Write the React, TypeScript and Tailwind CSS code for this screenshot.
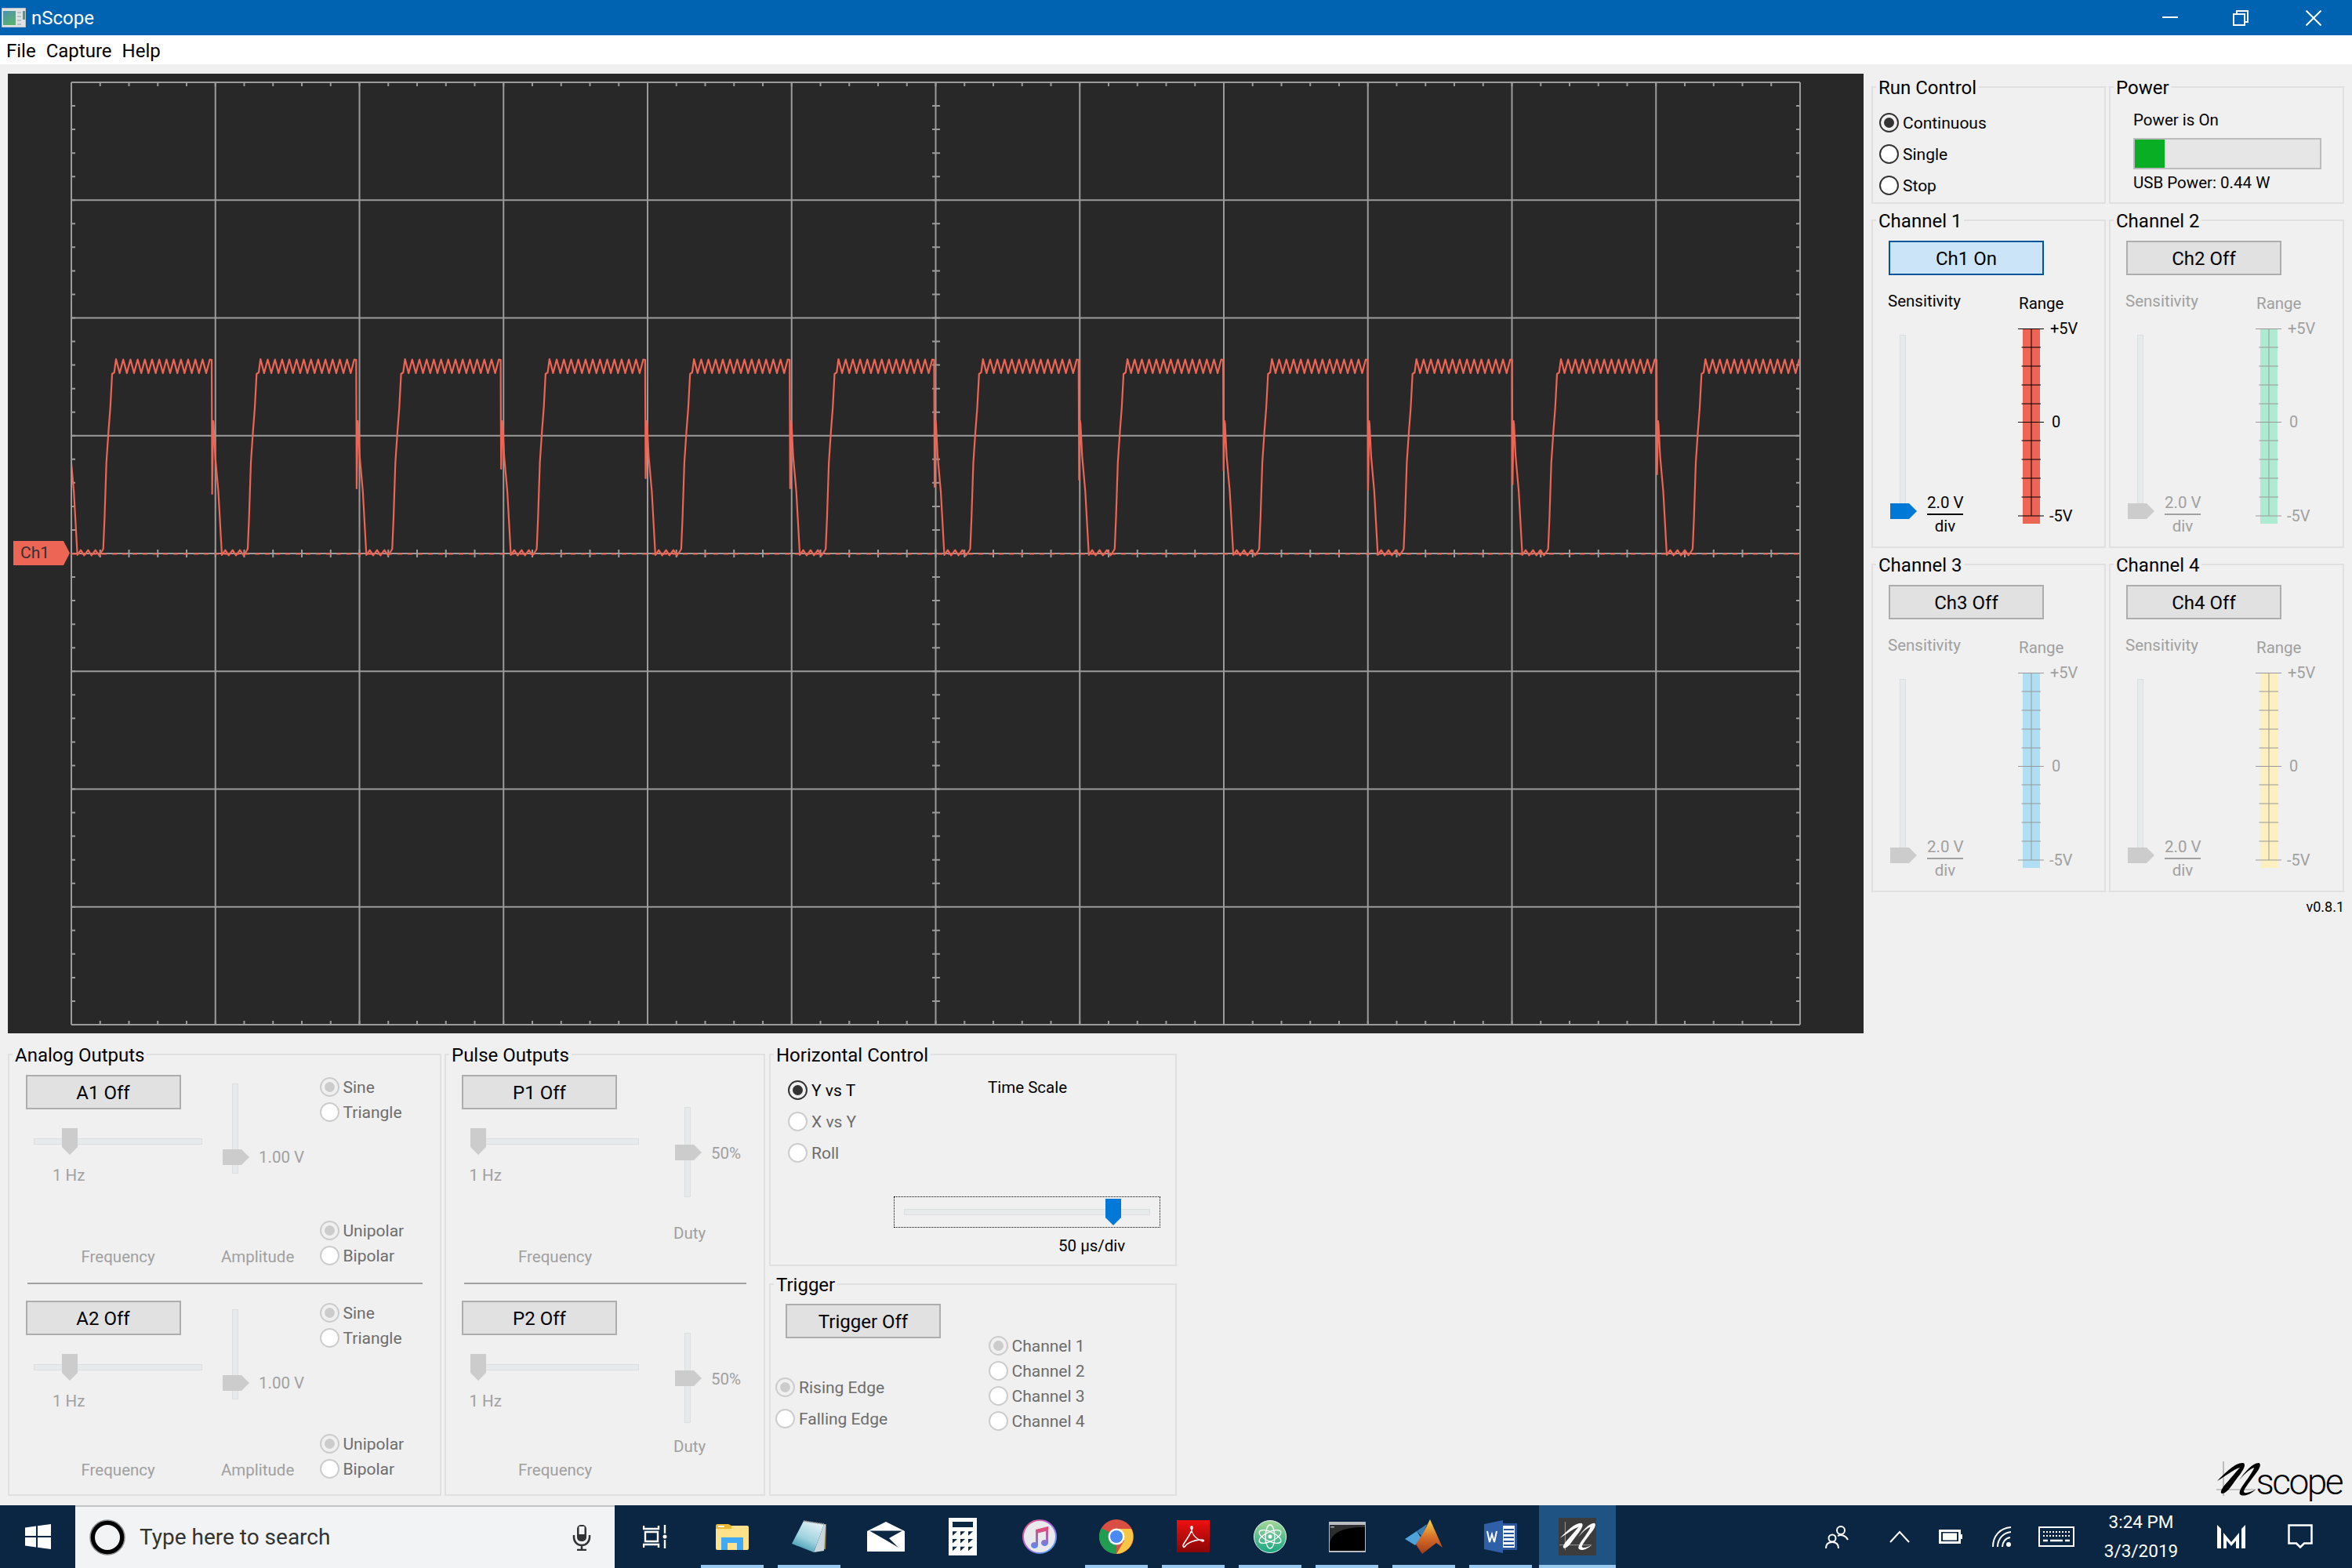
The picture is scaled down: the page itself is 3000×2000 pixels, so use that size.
import React from 'react'

const GRID = '#9b9b9b'
const TRACE = '#ec6555'
const gridX = Array.from({ length: 13 }, (_, i) => 91 + i * 183.75)
const gridY = Array.from({ length: 9 }, (_, i) => 105 + i * 150.25)

// waveform: one period per grid division
const spikes = [600, 630, 623, 598, 610, 623, 621, 612, 600, 625, 618, 605, 615]
const buildTrace = () => {
  let d = ''
  spikes.forEach((spike, k) => {
    const t = 270 + (k - 1) * 184.3
    const rel: [number, number][] = [
      [0, 459], [0.3, 540], [0.6, spike], [2, 537], [3, 562], [2.4, 540], [4.5, 582], [8.5, 627], [13, 708],
      [17.3, 701.7], [21.7, 708.3], [26.7, 701.7], [31, 708.3], [36, 701.7], [40.7, 708.3], [45, 702], [46, 700],
      [47.7, 660], [50, 590], [52.7, 550], [55, 520], [57.3, 477], [60, 475], [62.3, 458],
    ]
    for (let i = 0; i < 13; i++) {
      rel.push([66.9 + i * 9.2, 476], [71.5 + i * 9.2, 458.5])
    }
    rel.forEach(([x, y]) => {
      d += `${d ? 'L' : 'M'}${(t + x).toFixed(1)} ${y} `
    })
  })
  return d
}

const ticks = () => {
  let d = ''
  for (let i = 0; i <= 60; i++) {
    const x = 91 + i * 36.75
    d += `M${x} 105v5 M${x} 1307v-5 M${x} 701v10 `
  }
  for (let i = 0; i <= 40; i++) {
    const y = 105 + i * 30.05
    d += `M91 ${y}h5 M2296 ${y}h-5 M1189 ${y}h10 `
  }
  return d
}

const Scope = () => (
  <div className="relative w-[2367px] h-[1224px] bg-[#282828]">
    <svg className="block" width="2367" height="1224" viewBox="10 94 2367 1224" fill="none">
      <defs>
        <clipPath id="plot">
          <rect x="92" y="105" width="2204" height="1202" />
        </clipPath>
      </defs>
      {gridX.map((x) => (
        <line key={x} x1={x} x2={x} y1="105" y2="1307" stroke={GRID} strokeWidth="2" />
      ))}
      {gridY.map((y) => (
        <line key={y} x1="91" x2="2296" y1={y} y2={y} stroke={GRID} strokeWidth="2" />
      ))}
      <path d={ticks()} stroke={GRID} strokeWidth="2" />
      <line x1="91" x2="2296" y1="706.5" y2="706.5" stroke={TRACE} strokeWidth="2" strokeDasharray="6 7" />
      <path d={buildTrace()} stroke={TRACE} strokeWidth="2.2" strokeLinejoin="round" clipPath="url(#plot)" />
    </svg>
    <div className="absolute left-[7px] top-[596px] w-[72px] h-[31px]">
      <svg className="absolute inset-0" width="72" height="31">
        <polygon points="0,0 64,0 72,15.5 64,31 0,31" fill={TRACE} />
      </svg>
      <span className="absolute left-[9px] top-[1px] text-[21px] leading-[29px] text-[#33302f]">Ch1</span>
    </div>
  </div>
)

const GroupBox = ({ title, className, children }: { title: string; className: string; children?: React.ReactNode }) => (
  <div className={`relative border-2 border-[#e0e0e0] ${className}`}>
    <span className="absolute left-[4px] top-[-16px] bg-[#f0f0f0] px-[3px] text-[24px] leading-[32px] text-black whitespace-nowrap">
      {title}
    </span>
    {children}
  </div>
)

const Radio = ({
  label,
  checked,
  disabled,
  className = '',
}: {
  label: string
  checked?: boolean
  disabled?: boolean
  className?: string
}) => (
  <div className={`flex items-center gap-[5px] text-[21px] ${className} ${disabled ? 'text-[#6d6d6d]' : 'text-black'}`}>
    <span
      className={`flex items-center justify-center w-[25px] h-[25px] rounded-full border-[2.5px] ${
        disabled ? 'border-[#cccccc]' : 'border-[#333333]'
      } ${checked ? 'bg-[#f0f0f0]' : 'bg-white'}`}
    >
      {checked && <span className={`w-[13px] h-[13px] rounded-full ${disabled ? 'bg-[#cccccc]' : 'bg-[#333333]'}`} />}
    </span>
    <span className="whitespace-nowrap pt-[3px]">{label}</span>
  </div>
)

const Button = ({ label, on, className = '' }: { label: string; on?: boolean; className?: string }) => (
  <div
    className={`flex items-center justify-center w-[198px] h-[44px] pt-[2px] border-2 text-[24px] text-black ${
      on ? 'bg-[#cce4f7] border-[#005499]' : 'bg-[#e1e1e1] border-[#adadad]'
    } ${className}`}
  >
    {label}
  </div>
)

const VSlider = ({ height, thumbTop, active }: { height: string; thumbTop: string; active?: boolean }) => (
  <div className={`relative w-[34px] ${height}`}>
    <div className="ml-[12px] w-[8px] h-full bg-[#e7eaea] border border-[#dcdfdf]" />
    <svg className={`absolute left-0 ${thumbTop}`} width="34" height="20">
      <polygon points="0,0 24,0 34,10 24,20 0,20" fill={active ? '#0078d7' : '#cccccc'} />
    </svg>
  </div>
)

const HSlider = ({ width, thumbLeft, active }: { width: string; thumbLeft: string; active?: boolean }) => (
  <div className={`relative h-[34px] ${width}`}>
    <div className="absolute left-0 right-0 top-[13px] h-[8px] bg-[#e7eaea] border border-[#dcdfdf]" />
    <svg className={`absolute top-0 ${thumbLeft}`} width="20" height="34">
      <polygon points="0,0 20,0 20,24 10,34 0,24" fill={active ? '#0078d7' : '#cccccc'} />
    </svg>
  </div>
)

const RangeScale = ({ color, on }: { color: string; on?: boolean }) => {
  const ink = on ? '#000000' : '#999999'
  const label = on ? '#000000' : '#a0a0a0'
  const minor = [24, 48, 72, 96, 143, 167, 191, 215]
  return (
    <svg className="block overflow-visible" width="110" height="252" fontSize="20" fill={label}>
      <rect x="6" y="1" width="22" height="248" fill={color} />
      <line x1="17" x2="17" y1="0" y2="239" stroke={ink} strokeWidth="1" />
      {[0.5, 119.5, 239].map((y) => (
        <line key={y} x1="0" x2="33" y1={y} y2={y} stroke={ink} strokeWidth="1.2" />
      ))}
      {minor.map((y) => (
        <line key={y} x1="4.5" x2="29" y1={y} y2={y} stroke={ink} strokeWidth="1" />
      ))}
      <text x="41" y="7">+5V</text>
      <text x="43" y="126">0</text>
      <text x="40" y="246">-5V</text>
    </svg>
  )
}

const Channel = ({ n, on, color }: { n: number; on?: boolean; color: string }) => {
  const text = on ? 'text-black' : 'text-[#a0a0a0]'
  return (
    <GroupBox title={`Channel ${n}`} className="h-[419px]">
      <Button label={`Ch${n} ${on ? 'On' : 'Off'}`} on={on} className="ml-[20px] mt-[25px]" />
      <div className="flex ml-[19px] mt-[19px]">
        <div className={`w-[166px] text-[20.5px] leading-[28px] ${text}`}>
          <div>Sensitivity</div>
          <div className="flex mt-[29px] ml-[3px]">
            <VSlider height="h-[222px]" thumbTop="top-[215px]" active={on} />
            <div className="ml-[13px] mt-[200px] w-[46px] text-center whitespace-nowrap">
              <div className={`border-b-2 ${on ? 'border-black' : 'border-[#a0a0a0]'}`}>2.0 V</div>
              <div>div</div>
            </div>
          </div>
        </div>
        <div className={`pt-[3px] text-[20.5px] leading-[28px] ${text}`}>
          <div className="ml-[1px]">Range</div>
          <div className="mt-[18px]">
            <RangeScale color={color} on={on} />
          </div>
        </div>
      </div>
    </GroupBox>
  )
}

const gray = 'text-[20.5px] leading-[28px] text-[#a0a0a0] whitespace-nowrap'

const AnalogBlock = ({ n, low }: { n: number; low?: boolean }) => (
  <div className="flex">
    <div className="w-[249.5px] pt-[1px]">
      <Button label={`A${n} Off`} />
      <HSlider width="ml-[10.5px] mt-[24px] w-[214.5px]" thumbLeft="left-[36px]" />
      <div className={`ml-[34.5px] mt-[12px] ${gray}`}>1 Hz</div>
      <div className={`ml-[71px] ${low ? 'mt-[60px]' : 'mt-[76px]'} ${gray}`}>Frequency</div>
    </div>
    <div className="w-[125.5px] pt-[12px]">
      <div className="flex ml-[2px]">
        <VSlider height="h-[115px]" thumbTop="top-[84px]" />
        <div className={`ml-[12px] mt-[80px] ${gray}`}>1.00 V</div>
      </div>
      <div className={`${low ? 'mt-[76px]' : 'mt-[92px]'} ${gray}`}>Amplitude</div>
    </div>
    <div>
      <Radio label="Sine" checked disabled className="h-[32px]" />
      <Radio label="Triangle" disabled className="h-[32px]" />
      <Radio label="Unipolar" checked disabled className={`h-[32px] ${low ? 'mt-[103px]' : 'mt-[119px]'}`} />
      <Radio label="Bipolar" disabled className="h-[32px]" />
    </div>
  </div>
)

const PulseBlock = ({ n, low }: { n: number; low?: boolean }) => (
  <div className="flex">
    <div className="w-[270px] pt-[1px]">
      <Button label={`P${n} Off`} />
      <HSlider width="ml-[11px] mt-[24px] w-[215px]" thumbLeft="left-0" />
      <div className={`ml-[9.5px] mt-[12px] ${gray}`}>1 Hz</div>
      <div className={`ml-[72px] ${low ? 'mt-[60px]' : 'mt-[76px]'} ${gray}`}>Frequency</div>
    </div>
    <div className="pt-[42px] w-[100px]">
      <div className="flex ml-[2px]">
        <VSlider height="h-[115px]" thumbTop="top-[48px]" />
        <div className={`ml-[12px] mt-[45px] ${gray}`}>50%</div>
      </div>
      <div className={`${low ? 'mt-[16px]' : 'mt-[32px]'} ${gray}`}>Duty</div>
    </div>
  </div>
)

// taskbar icons
const Cortana = () => (
  <svg width="46" height="46" viewBox="0 0 46 46" fill="none">
    <circle cx="23" cy="23" r="19" stroke="#000000" strokeWidth="6" />
    <circle cx="23" cy="23" r="22" stroke="#8a8a8a" strokeWidth="1.5" />
  </svg>
)

const Mic = () => (
  <svg width="24" height="34" viewBox="0 0 24 34" fill="none">
    <rect x="6" y="1" width="12" height="21" rx="5" fill="#333333" />
    <rect x="8.5" y="3" width="7" height="10" fill="#f2f3f5" />
    <path d="M2 14v3a10 10 0 0 0 20 0v-3M12 27v5M6 33h12" stroke="#333333" strokeWidth="2.5" />
  </svg>
)

const WinLogo = () => (
  <svg width="33" height="32" viewBox="0 0 33 32" fill="#ffffff">
    <polygon points="0,4.5 14,2.5 14,15 0,15" />
    <polygon points="16,2.2 33,0 33,15 16,15" />
    <polygon points="0,17 14,17 14,29.5 0,27.5" />
    <polygon points="16,17 33,17 33,32 16,29.8" />
  </svg>
)

const TaskView = () => (
  <svg width="32" height="32" viewBox="0 0 32 32" fill="none" stroke="#ffffff" strokeWidth="2.4">
    <path d="M1 2v4h19V2M3 10h16v12H3zM1 30v-4h19v4M28 1v11M28 20v11" />
    <circle cx="28" cy="16" r="2.5" fill="#ffffff" stroke="none" />
  </svg>
)

const Explorer = () => (
  <svg width="42" height="34" viewBox="0 0 42 34">
    <rect x="0" y="3" width="42" height="31" rx="2" fill="#ffe28a" />
    <path d="M0 3a2 2 0 0 1 2-2h14l4 2v4H0z" fill="#eeb92f" />
    <rect x="3" y="3" width="8" height="2" fill="#ffffff" />
    <path d="M7 34V18h28v16h-8V25H15v9z" fill="#3fa9f5" />
  </svg>
)

const Notepad = () => (
  <svg width="44" height="42" viewBox="0 0 44 42">
    <defs>
      <linearGradient id="padGlass" x1="0.7" y1="0" x2="0.2" y2="1">
        <stop offset="0" stopColor="#e4f2f5" />
        <stop offset="0.55" stopColor="#9fd2df" />
        <stop offset="1" stopColor="#2f8fa8" />
      </linearGradient>
    </defs>
    <polygon points="41,5 44,5 43,37 41,37" fill="#a08a50" />
    <polygon points="41,5 43,6 41,39 28,41" fill="#c9d6dc" />
    <polygon points="15,1 41,5 28,41 0,30" fill="url(#padGlass)" />
    <line x1="15" y1="1" x2="41" y2="5" stroke="#9a9a9a" strokeWidth="2" strokeDasharray="1.5 1" />
  </svg>
)

const Mail = () => (
  <svg width="48" height="38" viewBox="0 0 48 38">
    <polygon points="24,0 48,12 48,38 0,38 0,12" fill="#ffffff" />
    <polygon points="3,11.5 45,11.5 28,21 40,33 25,24" fill="#0b2642" />
  </svg>
)

const Calc = () => {
  const keys = [5, 15, 25].flatMap((x) => [17.3, 27, 36.7].map((y) => [x, y]))
  return (
    <svg width="36" height="48" viewBox="0 0 36 48">
      <rect width="36" height="48" fill="#ffffff" />
      <rect x="5" y="5" width="26" height="7" fill="#0b2642" />
      {keys.map(([x, y]) => (
        <polygon key={`${x}-${y}`} points={`${x},${y} ${x + 6},${y} ${x},${y + 5.5}`} fill="#0b2642" />
      ))}
    </svg>
  )
}

const Itunes = () => (
  <svg width="44" height="44" viewBox="0 0 44 44">
    <defs>
      <linearGradient id="itRing" x1="0" y1="0" x2="1" y2="1">
        <stop offset="0" stopColor="#f4506a" />
        <stop offset="0.5" stopColor="#a566e8" />
        <stop offset="1" stopColor="#3fb8f0" />
      </linearGradient>
      <linearGradient id="itNote" x1="0" y1="0" x2="0" y2="1">
        <stop offset="0" stopColor="#f0456a" />
        <stop offset="1" stopColor="#5a8cf5" />
      </linearGradient>
    </defs>
    <circle cx="22" cy="22" r="21" fill="#e9e9ee" stroke="url(#itRing)" strokeWidth="2" />
    <path d="M17 13l16-4v21a4.5 4 0 1 1-3-3.8V15l-10 2.5V33a4.5 4 0 1 1-3-3.8z" fill="url(#itNote)" />
  </svg>
)

const Chrome = () => (
  <svg width="44" height="44" viewBox="0 0 44 44">
    <circle cx="22" cy="22" r="22" fill="#d94f43" />
    <path d="M22 22L3 33a22 22 0 0 1 0-22z" fill="#1f9e52" />
    <path d="M3 33l19-11 0 22A22 22 0 0 1 3 33z" fill="#1f9e52" />
    <path d="M22 12h19a22 22 0 0 1-19 32l10-17z" fill="#f6c644" />
    <circle cx="22" cy="22" r="10.5" fill="#ffffff" />
    <circle cx="22" cy="22" r="8" fill="#4a8af4" />
  </svg>
)

const Acrobat = () => (
  <svg width="42" height="42" viewBox="0 0 42 42" fill="none">
    <defs>
      <linearGradient id="acro" x1="0" y1="0" x2="0" y2="1">
        <stop offset="0" stopColor="#ee1010" />
        <stop offset="1" stopColor="#8a0505" />
      </linearGradient>
    </defs>
    <rect width="42" height="41" fill="url(#acro)" />
    <path
      d="M8 32c3-6 10-14 12-22 0-3-2-3-2 0 1 7 6 14 15 17 2 0 2-2-1-2-8 0-18 3-22 9-1 1-2 0-2-2z"
      stroke="#ffffff"
      strokeWidth="1.6"
    />
  </svg>
)

const Atom = () => (
  <svg width="42" height="42" viewBox="0 0 42 42" fill="none">
    <defs>
      <linearGradient id="atomBg" x1="0" y1="0" x2="0" y2="1">
        <stop offset="0" stopColor="#a5d79a" />
        <stop offset="1" stopColor="#17a883" />
      </linearGradient>
    </defs>
    <circle cx="21" cy="21" r="20.5" fill="url(#atomBg)" stroke="#e6f2e8" strokeWidth="1" />
    <g stroke="#ffffff" strokeWidth="1.4">
      <ellipse cx="21" cy="21" rx="15" ry="6" transform="rotate(25 21 21)" />
      <ellipse cx="21" cy="21" rx="15" ry="6" transform="rotate(-25 21 21)" />
      <ellipse cx="21" cy="21" rx="15" ry="6" transform="rotate(90 21 21)" />
    </g>
    <circle cx="21" cy="21" r="2.5" fill="#ffffff" />
  </svg>
)

const Cmd = () => (
  <svg width="47" height="39" viewBox="0 0 47 39">
    <rect width="47" height="39" fill="#b9bcc0" />
    <rect x="1" y="4" width="45" height="33" fill="#000000" />
    <path d="M1 28C4 14 16 7 46 7V4H1z" fill="#2d2d2d" />
    <rect x="2" y="6" width="5" height="1.5" fill="#aaaaaa" />
  </svg>
)

const Matlab = () => (
  <svg width="48" height="44" viewBox="0 0 48 44">
    <defs>
      <linearGradient id="mlPeak" x1="0" y1="0" x2="0" y2="1">
        <stop offset="0" stopColor="#f6d44a" />
        <stop offset="0.5" stopColor="#d9722a" />
        <stop offset="1" stopColor="#a33a18" />
      </linearGradient>
    </defs>
    <polygon points="0,25 15,15 21,24 13,33" fill="#4fa3dc" />
    <polygon points="15,15 22,22 28,6" fill="#3a7fb5" />
    <polygon points="32,0 48,36 40,30 22,44 14,32 24,16" fill="url(#mlPeak)" />
  </svg>
)

const Word = () => (
  <svg width="42" height="42" viewBox="0 0 42 42">
    <rect x="14" y="4" width="28" height="34" fill="#2b579a" />
    <rect x="24" y="7" width="15" height="28" fill="#ffffff" />
    <g fill="#2b579a">
      <rect x="25" y="11" width="13" height="2" />
      <rect x="25" y="16" width="13" height="2" />
      <rect x="25" y="21" width="13" height="2" />
      <rect x="25" y="26" width="13" height="2" />
      <rect x="25" y="31" width="13" height="2" />
    </g>
    <polygon points="0,5 24,0 24,42 0,37" fill="#2f5fa8" />
    <path d="M4 14l3 14 3-10 3 10 3-14" fill="none" stroke="#ffffff" strokeWidth="2" />
  </svg>
)

const ScriptN = ({ ink, width, height, axis }: { ink: string; width: number; height: number; axis: string }) => (
  <svg width={width} height={height} viewBox="0 0 56 46" fill="none">
    <path d="M9 0v44M0 36h50" stroke={axis} strokeWidth="1.2" />
    <path d="M1 25C12 14 24 2 33 2C39 2 36 10 26 22C20 30 14 40 8 41C4 41 6 36 10 31C18 22 26 12 30 8C22 10 10 20 1 25z" fill={ink} />
    <path
      d="M29 24C36 14 46 2 54 2C58 3 55 10 50 16C44 24 36 34 35 38C35 42 42 40 50 36C44 42 34 46 30 42C28 38 34 30 40 22C44 16 48 10 48 8C42 10 34 18 29 24z"
      fill={ink}
    />
  </svg>
)

const NscopeTask = () => (
  <div className="flex items-center justify-center w-[48px] h-[48px] bg-[#3c3c3c]">
    <ScriptN ink="#ffffff" axis="#9a9a9a" width={46} height={44} />
  </div>
)

const AppIcon = () => (
  <svg width="31" height="25" viewBox="0 0 31 25">
    <defs>
      <linearGradient id="appPlot" x1="0" y1="0" x2="0.6" y2="1">
        <stop offset="0" stopColor="#4f8fb0" />
        <stop offset="1" stopColor="#59b36f" />
      </linearGradient>
    </defs>
    <rect width="31" height="25" fill="#dfe3e6" stroke="#9aa3a8" />
    <rect x="2" y="4" width="16" height="18" fill="url(#appPlot)" />
    <g fill="#b9c0c4">
      <rect x="20" y="5" width="5" height="2" />
      <rect x="20" y="10" width="5" height="2" />
      <rect x="20" y="15" width="5" height="2" />
      <rect x="20" y="20" width="5" height="2" />
    </g>
    <rect x="27" y="4" width="3" height="11" fill="#4f9a8c" />
  </svg>
)

const taskApps: { icon: React.ReactNode; open?: boolean; active?: boolean }[] = [
  { icon: <TaskView /> },
  { icon: <Explorer />, open: true },
  { icon: <Notepad />, open: true },
  { icon: <Mail /> },
  { icon: <Calc /> },
  { icon: <Itunes /> },
  { icon: <Chrome />, open: true },
  { icon: <Acrobat />, open: true },
  { icon: <Atom />, open: true },
  { icon: <Cmd />, open: true },
  { icon: <Matlab />, open: true },
  { icon: <Word />, open: true },
  { icon: <NscopeTask />, open: true, active: true },
]

const Tray = () => (
  <div className="flex flex-1 justify-end items-center h-full pr-[13px] text-white">
    <div className="flex w-[80px] justify-center">
      <svg width="30" height="30" viewBox="0 0 30 30" fill="none" stroke="#ffffff" strokeWidth="2">
        <circle cx="20" cy="7" r="5" />
        <circle cx="9" cy="17" r="4.5" />
        <path d="M1 30c0-5 3-8 8-8s8 3 8 8M16 14c4-2 10-1 13 5" />
      </svg>
    </div>
    <div className="flex w-[80px] justify-center">
      <svg width="26" height="16" viewBox="0 0 26 16" fill="none" stroke="#ffffff" strokeWidth="2">
        <path d="M1 15L13 2l12 13" />
      </svg>
    </div>
    <div className="flex w-[50px] justify-center">
      <svg width="30" height="18" viewBox="0 0 30 18" fill="none">
        <rect x="1.5" y="1.5" width="25" height="15" stroke="#ffffff" strokeWidth="3" />
        <rect x="5" y="4.5" width="18" height="9" fill="#ffffff" />
        <rect x="27" y="6" width="3" height="6" fill="#ffffff" />
      </svg>
    </div>
    <div className="flex w-[82px] justify-center">
      <svg width="26" height="26" viewBox="0 0 26 26" fill="none" stroke="#ffffff" strokeWidth="2">
        <path d="M1 26C1 12 10 2 24 1M7 26C7 16 14 8 24 7M13 26c0-6 4-11 10-12" />
        <circle cx="21" cy="23" r="3" fill="#ffffff" stroke="none" />
      </svg>
    </div>
    <div className="flex w-[56px] justify-center">
      <svg width="46" height="26" viewBox="0 0 46 26" fill="none">
        <rect x="1" y="1" width="44" height="24" stroke="#ffffff" strokeWidth="2" />
        <path d="M6 7h34M6 12h34" stroke="#ffffff" strokeWidth="2" strokeDasharray="2 2" />
        <path d="M6 18h6M15 18h16M34 18h6" stroke="#ffffff" strokeWidth="2.5" />
      </svg>
    </div>
    <div className="w-[160px] text-center text-[22.5px] leading-[37px]">
      <div>3:24 PM</div>
      <div>3/3/2019</div>
    </div>
    <div className="flex w-[70px] justify-center">
      <svg width="36" height="30" viewBox="0 0 36 30" fill="#ffffff">
        <polygon points="0,0 5,5 5,30 0,30" />
        <polygon points="36,0 31,5 31,30 36,30" />
        <polygon points="8,10 18,22 28,10 28,30 24,30 24,20 18,27 12,20 12,30 8,30" />
      </svg>
    </div>
    <div className="flex w-[106px] justify-center">
      <svg width="32" height="32" viewBox="0 0 32 32" fill="none" stroke="#ffffff" strokeWidth="2.5">
        <path d="M1.5 1.5h29v23H21l-5 5-5-5H1.5z" />
      </svg>
    </div>
  </div>
)

export default function App() {
  return (
    <div className="flex flex-col w-[3000px] h-[2000px] overflow-hidden bg-[#f0f0f0] text-black font-['Roboto',sans-serif]">
      <div className="flex items-center h-[45px] bg-[#0063b1] text-white">
        <div className="ml-[2px]">
          <AppIcon />
        </div>
        <span className="ml-[7px] text-[24px]">nScope</span>
        <div className="flex items-center ml-auto h-full">
          <svg width="20" height="3" viewBox="0 0 20 3" className="mr-[70px]">
            <rect width="20" height="2" fill="#ffffff" />
          </svg>
          <svg width="20" height="20" viewBox="0 0 20 20" fill="none" stroke="#ffffff" strokeWidth="2" className="mr-[73px]">
            <rect x="1" y="5" width="14" height="14" />
            <path d="M5 5V1h14v14h-4" />
          </svg>
          <svg width="20" height="20" viewBox="0 0 20 20" fill="none" stroke="#ffffff" strokeWidth="2" className="mr-[39px]">
            <path d="M0.5 0.5l19 19M19.5 0.5l-19 19" />
          </svg>
        </div>
      </div>
      <div className="flex items-center h-[37px] pt-[2px] bg-white text-[24px] pl-[8px] gap-[13px]">
        <span>File</span>
        <span>Capture</span>
        <span>Help</span>
      </div>

      <div className="flex h-[1838px]">
        <div className="w-[2378px] pl-[10px] pt-[12px]">
          <Scope />
          <div className="flex mt-[26px] gap-[4px]">
            <GroupBox title="Analog Outputs" className="w-[553px] h-[564px]">
              <div className="pl-[20.5px] pt-[24px]">
                <AnalogBlock n={1} />
              </div>
              <div className="ml-[23px] mt-[19px] w-[504px] h-[2px] bg-[#a0a0a0]" />
              <div className="pl-[20.5px] pt-[20px]">
                <AnalogBlock n={2} low />
              </div>
            </GroupBox>
            <GroupBox title="Pulse Outputs" className="w-[409px] h-[564px]">
              <div className="pl-[20px] pt-[24px]">
                <PulseBlock n={1} />
              </div>
              <div className="ml-[23px] mt-[19px] w-[360px] h-[2px] bg-[#a0a0a0]" />
              <div className="pl-[20px] pt-[20px]">
                <PulseBlock n={2} low />
              </div>
            </GroupBox>
            <div className="flex flex-col gap-[22px] ml-px">
              <GroupBox title="Horizontal Control" className="w-[520px] h-[271px]">
                <div className="flex pt-[24px]">
                  <div className="w-[157px] pl-[22px]">
                    <Radio label="Y vs T" checked className="h-[40px]" />
                    <Radio label="X vs Y" disabled className="h-[40px]" />
                    <Radio label="Roll" disabled className="h-[40px]" />
                  </div>
                  <div className="text-[20.5px] leading-[28px]">
                    <div className="ml-[120px] mt-[3px]">Time Scale</div>
                    <div className="w-[340px] h-[40px] mt-[125px] border border-dotted border-black pl-[12px] pt-[2px]">
                      <HSlider width="w-[314px]" thumbLeft="left-[257px]" active />
                    </div>
                    <div className="ml-[210px] mt-[9px]">50 µs/div</div>
                  </div>
                </div>
              </GroupBox>
              <GroupBox title="Trigger" className="w-[520px] h-[271px]">
                <div className="flex">
                  <div className="w-[277.5px] pt-[24px] pl-[19px]">
                    <Button label="Trigger Off" />
                    <div className="mt-[42px] -ml-[13px]">
                      <Radio label="Rising Edge" checked disabled className="h-[40px]" />
                      <Radio label="Falling Edge" disabled className="h-[40px]" />
                    </div>
                  </div>
                  <div className="pt-[61px]">
                    <Radio label="Channel 1" checked disabled className="h-[32px]" />
                    <Radio label="Channel 2" disabled className="h-[32px]" />
                    <Radio label="Channel 3" disabled className="h-[32px]" />
                    <Radio label="Channel 4" disabled className="h-[32px]" />
                  </div>
                </div>
              </GroupBox>
            </div>
          </div>
        </div>

        <div className="relative flex-1 pl-[9px] pt-[28px]">
          <div className="grid grid-cols-[299px_300px] gap-x-[4px] gap-y-[20px]">
            <GroupBox title="Run Control" className="h-[150px]">
              <div className="pl-[8px] pt-[24px]">
                <Radio label="Continuous" checked className="h-[40px]" />
                <Radio label="Single" className="h-[40px]" />
                <Radio label="Stop" className="h-[40px]" />
              </div>
            </GroupBox>
            <GroupBox title="Power" className="h-[150px]">
              <div className="pl-[29px] pt-[27px] text-[20.5px] leading-[28px]">
                <div>Power is On</div>
                <div className="flex w-[240px] h-[40px] mt-[9px] bg-[#e6e6e6] border-2 border-[#bcbcbc]">
                  <div className="w-[38px] bg-[#09ae25]" />
                </div>
                <div className="mt-[3px]">USB Power: 0.44 W</div>
              </div>
            </GroupBox>
            <Channel n={1} on color="#ec6555" />
            <Channel n={2} color="#aeebd2" />
            <Channel n={3} color="#b0def3" />
            <Channel n={4} color="#fcefc0" />
          </div>
          <div className="mt-[6px] pr-[10px] text-right text-[18px] leading-[26px]">v0.8.1</div>
          <div className="absolute right-[13px] bottom-[10px] flex items-end">
            <ScriptN ink="#000000" axis="#9a9a9a" width={56} height={46} />
            <span className="-ml-[6px] text-[46px] leading-[40px] tracking-[-2.5px] font-light">scope</span>
          </div>
        </div>
      </div>

      <div className="flex items-center h-[80px] bg-[#0b2642]">
        <div className="flex items-center justify-center w-[96px] h-full">
          <WinLogo />
        </div>
        <div className="flex items-center w-[688px] h-full bg-[#f2f3f5] border-t-2 border-[#c4c4c4] pl-[18px]">
          <Cortana />
          <span className="ml-[18px] text-[28px] text-[#333333]">Type here to search</span>
          <div className="flex ml-auto mr-[30px]">
            <Mic />
          </div>
        </div>
        <div className="flex h-full ml-[3px]">
          {taskApps.map((app, i) => (
            <div key={i} className={`relative flex items-center justify-center w-[98px] h-full ${app.active ? 'bg-[#1f5383]' : ''}`}>
              {app.icon}
              {app.open && (
                <span className={`absolute bottom-0 h-[4px] bg-[#99c8ee] ${app.active ? 'left-0 right-0' : 'left-[9px] right-[9px]'}`} />
              )}
            </div>
          ))}
        </div>
        <Tray />
      </div>
    </div>
  )
}
